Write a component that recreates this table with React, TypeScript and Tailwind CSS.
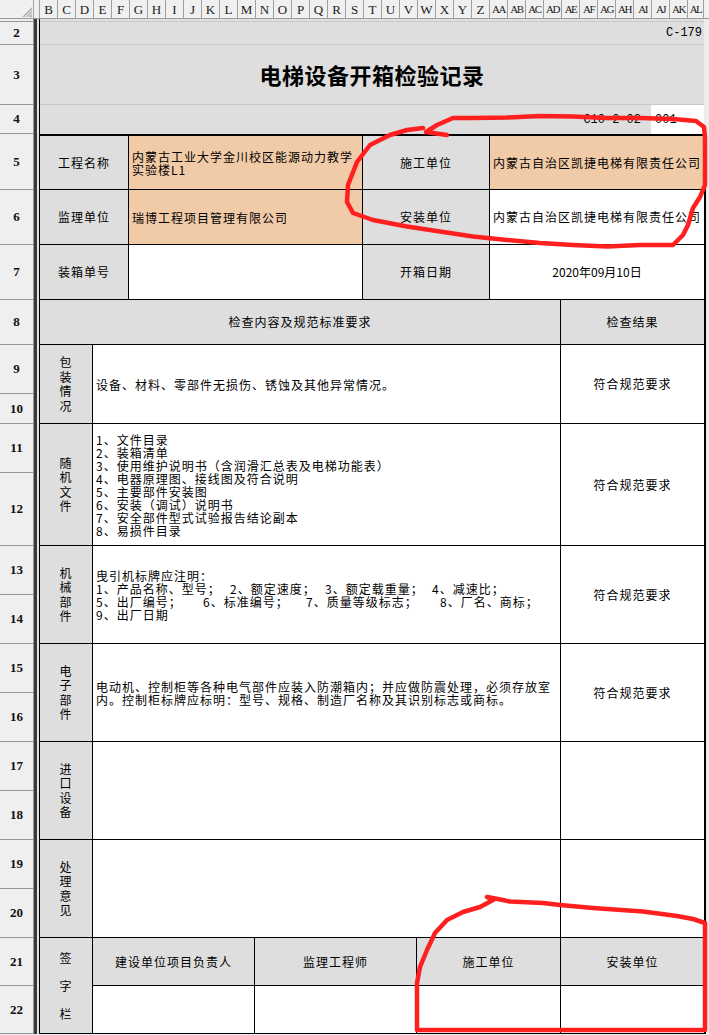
import React from "react";

const cjk = "font-['Noto_Sans_CJK_SC',sans-serif]";
const serif = "font-['Liberation_Serif',serif]";
const mono = "font-['Liberation_Mono',monospace]";

const colLetters = [
  "B","C","D","E","F","G","H","I","J","K","L","M","N","O","P","Q","R","S","T","U","V","W","X","Y","Z",
  "AA","AB","AC","AD","AE","AF","AG","AH","AI","AJ","AK","AL",
];

const rowNums = [
  { n: "", h: 3 },
  { n: "2", h: 23 },
  { n: "3", h: 60 },
  { n: "4", h: 29 },
  { n: "5", h: 56 },
  { n: "6", h: 55 },
  { n: "7", h: 55 },
  { n: "8", h: 45 },
  { n: "9", h: 49 },
  { n: "10", h: 30 },
  { n: "11", h: 49 },
  { n: "12", h: 73 },
  { n: "13", h: 49 },
  { n: "14", h: 49 },
  { n: "15", h: 49 },
  { n: "16", h: 49 },
  { n: "17", h: 49 },
  { n: "18", h: 49 },
  { n: "19", h: 49 },
  { n: "20", h: 49 },
  { n: "21", h: 48 },
  { n: "22", h: 48 },
];

function ColumnHeader() {
  return (
    <div className="flex h-[19px] bg-[#f0f0f0] border-b border-[#9a9a9a]">
      <div className="relative w-[34px] border-r border-[#a0a0a0]">
        <svg className="absolute right-[1px] bottom-[1px]" width="10" height="10" viewBox="0 0 10 10">
          <polygon points="10,0 10,10 0,10" fill="#b4b4b4" />
          <line x1="10" y1="3" x2="3" y2="10" stroke="#f4f4f4" strokeWidth="1" />
          <line x1="10" y1="6" x2="6" y2="10" stroke="#f4f4f4" strokeWidth="1" />
        </svg>
      </div>
      <div className="w-[6px] border-r border-[#a0a0a0]" />
      {colLetters.map((c, i) => (
        <div
          key={c}
          className={`${i === colLetters.length - 1 ? "w-[16px]" : "w-[18px]"} overflow-hidden border-r border-[#a0a0a0] flex items-center justify-center leading-none text-[#1a1a1a] ${serif} ${c.length > 1 ? "text-[11px] tracking-[-1.5px]" : "text-[13px]"}`}
        >
          {c}
        </div>
      ))}
      <div className="flex-1" />
    </div>
  );
}

function RowNumbers() {
  return (
    <div className="w-[34px] flex flex-col">
      {rowNums.map((r, i) => (
        <div
          key={i}
          style={{ height: r.h }}
          className={`bg-[#efefef] border-b border-r border-[#959595] flex items-center justify-center text-[13px] font-bold text-[#111] ${serif}`}
        >
          {r.n}
        </div>
      ))}
    </div>
  );
}

function Vert({ text, gap = "leading-[14.5px]" }: { text: string; gap?: string }) {
  return (
    <div className={`flex flex-col items-center ${gap}`}>
      {text.split("").map((ch, i) => (
        <span key={i}>{ch}</span>
      ))}
    </div>
  );
}

const label = "bg-[#dedede] flex items-center justify-center border-b border-r border-black";
const peach = "bg-[#f1caa7] flex items-center pl-[3px] border-b border-black leading-[13px]";
const plain = "bg-white flex items-center border-b border-black";

function Section({ h, title, children, result }: { h: string; title: string; children?: React.ReactNode; result?: string }) {
  return (
    <div className={`grid grid-cols-[53px_468px_143px] ${h}`}>
      <div className="bg-[#dedede] flex items-center justify-center border-b border-r border-black">
        <Vert text={title} />
      </div>
      <div className="bg-white flex items-center pl-[3px] border-b border-r border-black leading-[13px]">{children}</div>
      <div className="bg-white flex items-center justify-center border-b border-black">{result}</div>
    </div>
  );
}

function Sheet() {
  return (
    <div className={`flex flex-col text-[12px] tracking-[1px] text-black ${cjk}`}>
      {/* title block, rows 1-4 */}
      <div className="w-[664px] bg-[#dedede] tracking-normal">
        <div className="h-[3px] border-b border-[#cbcbc4]" />
        <div className={`h-[23px] border-b border-[#c8c8c0] flex items-center justify-end pr-[2px] text-[12px] ${mono}`}>C-179</div>
        <div className="h-[60px] border-b border-[#c8c8c0] flex items-center justify-center text-[22px] font-bold tracking-[0.5px]">
          电梯设备开箱检验记录
        </div>
        <div className="h-[29px] flex justify-end">
          <span className={`self-center mr-[10px] text-[12px] ${mono}`}>C10-2-02</span>
          <div className={`w-[53px] bg-white flex items-center pl-[4px] text-[12px] ${mono}`}>001</div>
        </div>
      </div>

      <div className="w-[666px] border-t-2 border-r-2 border-black bg-white">
        {/* rows 5-7 */}
        <div className="grid grid-cols-[89px_234px_127px_214px] grid-rows-[54px_55px_55px]">
          <div className={label}>工程名称</div>
          <div className={`${peach} border-r`}>
            内蒙古工业大学金川校区能源动力教学
            <br />
            实验楼L1
          </div>
          <div className={label}>施工单位</div>
          <div className={`${peach} whitespace-nowrap`}>内蒙古自治区凯捷电梯有限责任公司</div>

          <div className={label}>监理单位</div>
          <div className={`${peach} border-r`}>瑞博工程项目管理有限公司</div>
          <div className={label}>安装单位</div>
          <div className={`${plain} pl-[3px] whitespace-nowrap`}>内蒙古自治区凯捷电梯有限责任公司</div>

          <div className={label}>装箱单号</div>
          <div className={`${plain} border-r`} />
          <div className={label}>开箱日期</div>
          <div className={`${plain} justify-center tracking-normal`}>2020年09月10日</div>
        </div>

        {/* row 8 */}
        <div className="grid grid-cols-[521px_143px] h-[45px]">
          <div className={label}>检查内容及规范标准要求</div>
          <div className="bg-[#dedede] flex items-center justify-center border-b border-black">检查结果</div>
        </div>

        <Section h="h-[79px]" title="包装情况" result="符合规范要求">
          设备、材料、零部件无损伤、锈蚀及其他异常情况。
        </Section>

        <Section h="h-[122px]" title="随机文件" result="符合规范要求">
          <div className="flex flex-col">
            <span>1、文件目录</span>
            <span>2、装箱清单</span>
            <span>3、使用维护说明书（含润滑汇总表及电梯功能表）</span>
            <span>4、电器原理图、接线图及符合说明</span>
            <span>5、主要部件安装图</span>
            <span>6、安装（调试）说明书</span>
            <span>7、安全部件型式试验报告结论副本</span>
            <span>8、易损件目录</span>
          </div>
        </Section>

        <Section h="h-[98px]" title="机械部件" result="符合规范要求">
          <div className="flex flex-col whitespace-nowrap">
            <span>曳引机标牌应注明：</span>
            <div className="flex">
              <span className="w-[134px]">1、产品名称、型号；</span>
              <span className="w-[95px]">2、额定速度；</span>
              <span className="w-[107px]">3、额定载重量；</span>
              <span>4、减速比；</span>
            </div>
            <div className="flex">
              <span className="w-[107px]">5、出厂编号；</span>
              <span className="w-[103px]">6、标准编号；</span>
              <span className="w-[134px]">7、质量等级标志；</span>
              <span>8、厂名、商标；</span>
            </div>
            <span>9、出厂日期</span>
          </div>
        </Section>

        <Section h="h-[98px]" title="电子部件" result="符合规范要求">
          <div className="flex flex-col whitespace-nowrap">
            <span>电动机、控制柜等各种电气部件应装入防潮箱内；并应做防震处理，必须存放室</span>
            <span>内。控制柜标牌应标明：型号、规格、制造厂名称及其识别标志或商标。</span>
          </div>
        </Section>

        <Section h="h-[98px]" title="进口设备" />
        <Section h="h-[98px]" title="处理意见" />

        {/* rows 21-22 */}
        <div className="grid grid-cols-[53px_162px_162px_144px_143px] grid-rows-[48px_48px]">
          <div className="row-span-2 bg-[#dedede] flex items-center justify-center border-b border-r border-black">
            <Vert text="签字栏" gap="leading-[28px]" />
          </div>
          <div className={label}>建设单位项目负责人</div>
          <div className={label}>监理工程师</div>
          <div className={label}>施工单位</div>
          <div className="bg-[#dedede] flex items-center justify-center border-b border-black">安装单位</div>
          <div className={`${plain} border-r`} />
          <div className={`${plain} border-r`} />
          <div className={`${plain} border-r`} />
          <div className={plain} />
        </div>
      </div>
    </div>
  );
}

function RedMarks() {
  return (
    <svg className="absolute inset-0 pointer-events-none" width="709" height="1035" viewBox="0 0 709 1035">
      <g fill="none" stroke="#ff1f1f" strokeWidth="4.5" strokeLinecap="round" strokeLinejoin="round">
        <polyline points="447,135 426,132 437,125 453,118 473,118 507,117.5 540,116 573,116.5 607,118 640,118 673,119 696,121 704,127 705,138 705,185 700,197 693,208 688,225 683,235 673,245 640,245 607,246.5 573,245 540,243 507,240 473,236.5 440,231.5 407,226.5 373,220 353,213 347,202 348,185 357,162 370,145 390,135 407,130 423,128" />
        <polyline points="487,897 498,899 510,901.5 543,903 560,905 593,908 643,911.5 677,916 693,919 705,923 705,1030 417,1030 417,983 420,967 427,950 435,933 447,920 463,912 480,907 493,900 487,897" />
      </g>
    </svg>
  );
}

export default function App() {
  return (
    <div className="relative w-[709px] h-[1035px] overflow-hidden bg-[#ececec]">
      <ColumnHeader />
      <div className="flex">
        <RowNumbers />
        <div className="w-[3px] bg-[#3a3a3a]" />
        <div className="w-[2px] bg-[#e2e2e2]" />
        <div className="w-[1px] bg-black" />
        <Sheet />
        <div className="flex-1" />
      </div>
      <RedMarks />
    </div>
  );
}
